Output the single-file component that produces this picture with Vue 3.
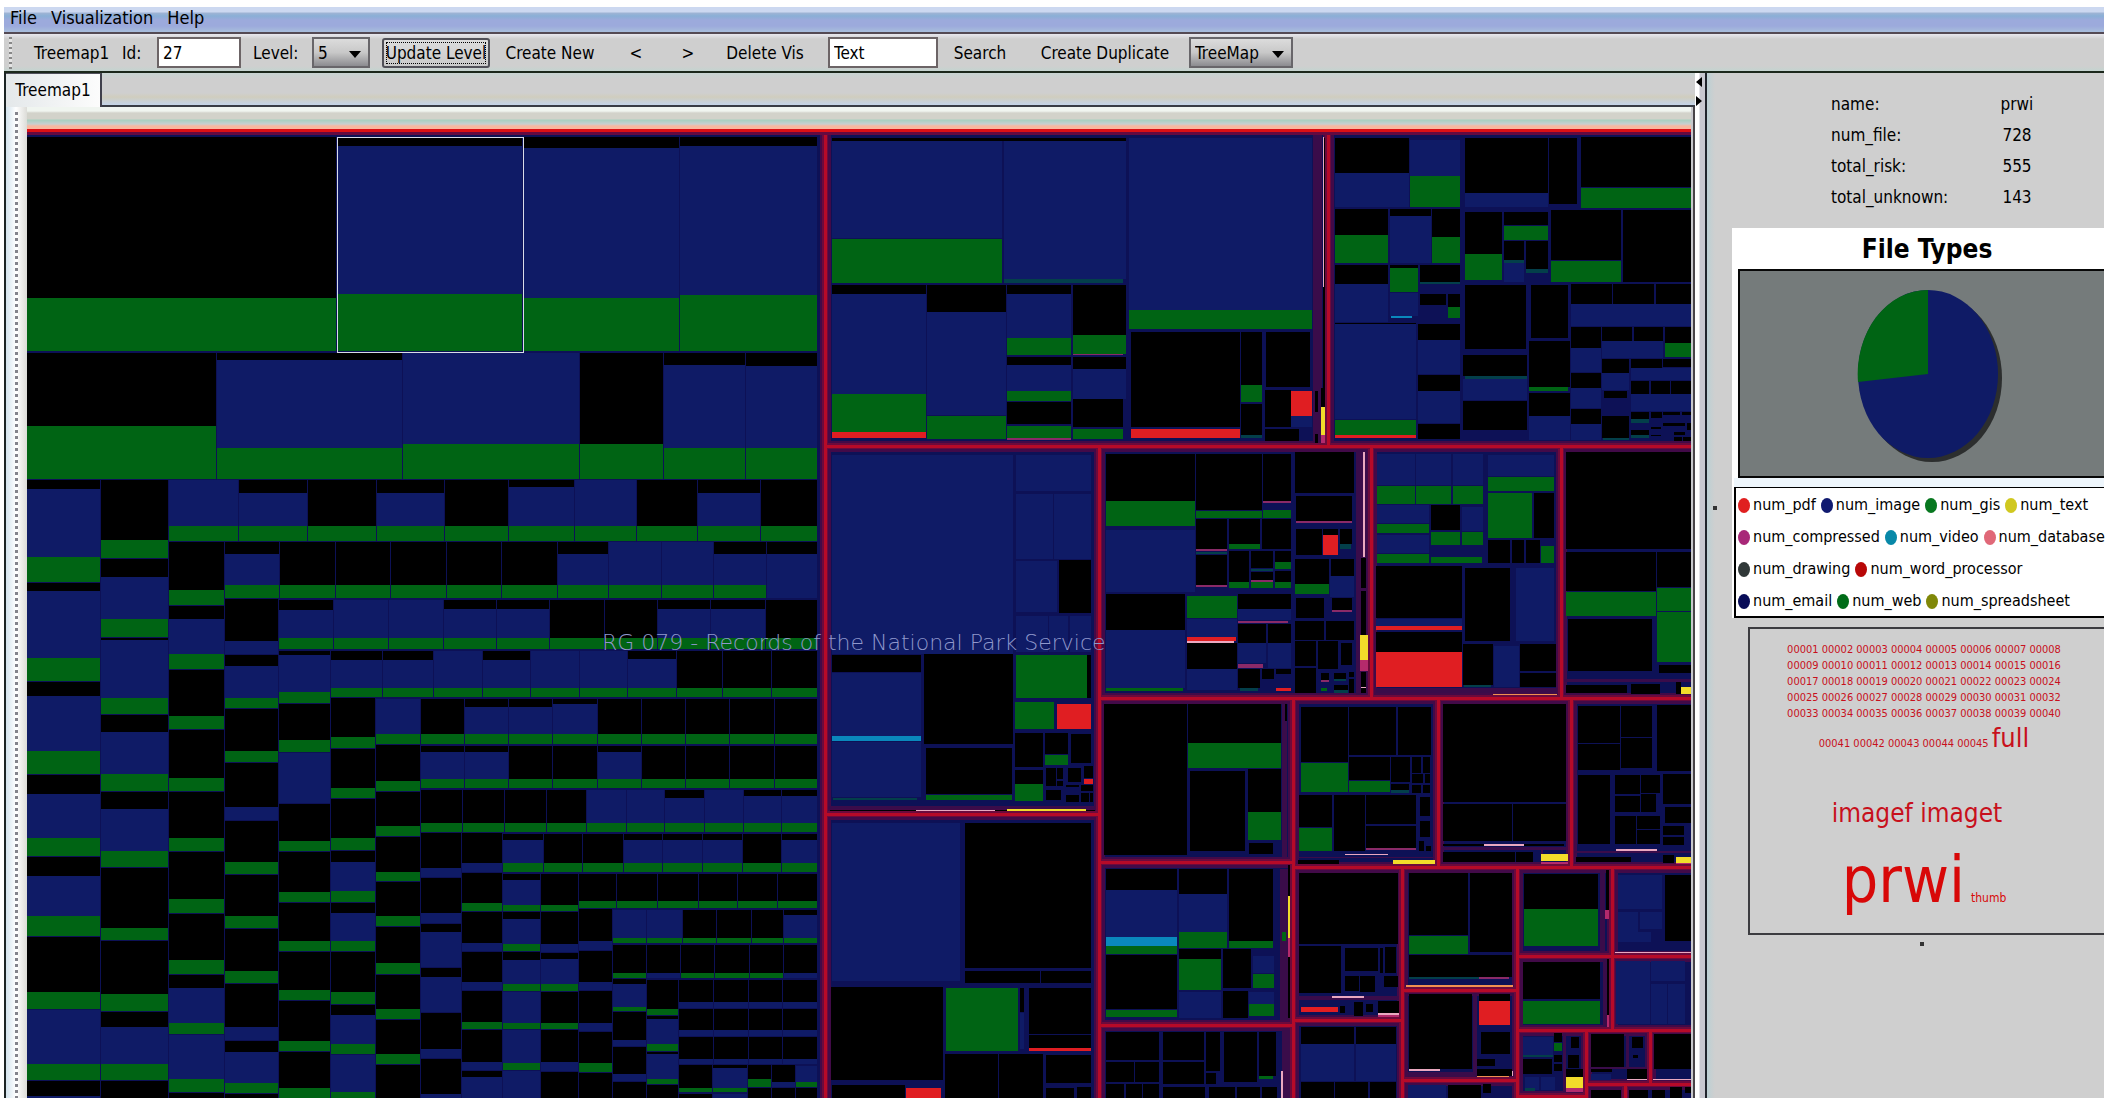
<script setup>
import { ref } from 'vue'

const nodeId = ref('27')
const level = ref('5')
const query = ref('Text')
const view = ref('TreeMap')

const info = [
  ['name:', 'prwi'],
  ['num_file:', '728'],
  ['total_risk:', '555'],
  ['total_unknown:', '143'],
]

const legend = [
  [['num_pdf', '#e02020'], ['num_image', '#101a70'], ['num_gis', '#087820'], ['num_text', '#d0c820']],
  [['num_compressed', '#a82878'], ['num_video', '#0888a8'], ['num_database', '#e06878']],
  [['num_drawing', '#303838'], ['num_word_processor', '#b80808']],
  [['num_email', '#080c58'], ['num_web', '#006c18'], ['num_spreadsheet', '#808808']],
]

const pad = (n) => String(n).padStart(5, '0')
const tagRows = [0, 8, 16, 24, 32].map((s) => Array.from({ length: 8 }, (_, i) => pad(s + i + 1)))
const lastTags = [41, 42, 43, 44, 45].map(pad)

/* ---- treemap ---- */
const colors = {
  plum: '#3a0c4a',
  black: '#000000',
  blue: '#0f1b66',
  green: '#006414',
  teal: '#033f4a',
  sky: '#0a88bc',
  mauve: '#8a2a68',
  magenta: '#b42a6c',
  red: '#e01e22',
  yellow: '#f2dc2a',
  pink: '#eaa8c0',
  orange: '#f09050',
}
const shapes = Object.fromEntries(Object.keys(colors).map((k) => [k, []]))

function add(color, x1, y1, x2, y2) {
  if (x2 > x1 && y2 > y1) shapes[color].push(`M${x1} ${y1}H${x2}V${y2}H${x1}Z`)
}

// A cell is black on top, then blue from `b`, then green from `g` (0 = band absent).
function cell(m, x1, x2, y1, b, g, y2) {
  const X1 = m.x(x1)
  const X2 = m.x(x2) - 1
  const end = m.y(y2) - 1
  const gy = g ? m.y(g) : end
  const by = b ? m.y(b) : gy
  add('black', X1, m.y(y1), X2, by)
  add('blue', X1, by, X2, gy)
  add('green', X1, gy, X2, end)
}

const mapper = (x, y, w, h, cols, rows) => ({
  x: (v) => Math.round(x + (v * w) / cols),
  y: (v) => Math.round(y + (v * h) / rows),
})

const page = mapper(0, 0, 1, 1, 1, 1)
const top = [
  [27, 337, 137, 0, 298, 352], [337, 523, 137, 146, 294, 352], [523, 680, 137, 148, 298, 352], [680, 818, 137, 146, 295, 352],
  [27, 217, 353, 0, 426, 480], [217, 403, 353, 360, 448, 480], [403, 580, 353, 353, 444, 480],
  [580, 664, 353, 0, 444, 480], [664, 746, 353, 365, 448, 480], [746, 818, 353, 366, 448, 480],
]
top.forEach((c) => cell(page, ...c))

const grid = mapper(0, 470, 830, 635, 2490, 1568)
const columns = [
  [81, 304, [25, 48, 215, 278], [278, 298, 463, 524], [524, 558, 695, 752], [752, 800, 909, 956], [956, 1003, 1102, 1153], [1153, 0, 1288, 1333], [1333, 1333, 1466, 1508], [1508, 1547, 0, 1554]],
  [304, 508, [25, 0, 174, 220], [220, 264, 369, 416], [416, 421, 563, 605], [605, 647, 750, 795], [795, 837, 940, 984], [984, 0, 1130, 1164], [1164, 0, 1294, 1339], [1339, 1375, 1466, 1508], [1508, 0, 0, 1554]],
  [508, 676, [178, 0, 297, 336], [336, 368, 455, 493], [493, 0, 608, 643], [643, 0, 760, 796], [796, 0, 909, 944], [944, 0, 1060, 1096], [1096, 0, 1210, 1246], [1246, 1279, 1366, 1395], [1395, 1395, 1505, 1539], [1539, 0, 0, 1554]],
  [676, 836, [318, 422, 0, 456], [456, 484, 563, 590], [590, 0, 694, 724], [724, 832, 0, 867], [867, 0, 968, 999], [999, 0, 1102, 1134], [1134, 0, 1238, 1270], [1270, 1375, 0, 1409], [1409, 1438, 1513, 1542], [1542, 0, 0, 1554]],
  [836, 992, [447, 458, 547, 578], [578, 0, 667, 700], [700, 700, 0, 825], [825, 0, 916, 944], [944, 0, 1041, 1068], [1068, 0, 1163, 1191], [1191, 0, 1285, 1312], [1312, 0, 1409, 1436], [1436, 0, 1527, 1554]],
  [992, 1127, [564, 0, 660, 690], [690, 0, 786, 813], [813, 0, 909, 942], [942, 968, 1040, 1068], [1068, 1094, 1163, 1191], [1191, 0, 1288, 1320], [1320, 1346, 1417, 1444], [1444, 1444, 1536, 1554]],
  [1127, 1262, [680, 0, 767, 794], [794, 0, 880, 906], [906, 0, 992, 1018], [1018, 0, 1102, 1129], [1129, 0, 1218, 1246], [1246, 0, 1332, 1358], [1358, 0, 1443, 1470], [1470, 0, 0, 1554]],
  [1262, 1387, [897, 983, 0, 1008], [1008, 1094, 0, 1120], [1120, 1141, 0, 1229], [1229, 1252, 0, 1341], [1341, 1430, 0, 1454], [1454, 1541, 0, 1554]],
  [1387, 1509, [897, 970, 0, 994], [994, 0, 1070, 1091], [1091, 1168, 0, 1190], [1190, 1264, 0, 1286], [1286, 0, 1364, 1384], [1384, 1463, 0, 1484], [1484, 1499, 0, 1554]],
  [1509, 1622, [997, 1012, 1073, 1091], [1091, 1109, 1170, 1191], [1191, 1210, 1270, 1288], [1288, 1288, 1366, 1384], [1384, 1384, 1465, 1484], [1484, 1484, 0, 1554]],
  [1622, 1736, [997, 0, 1073, 1091], [1091, 1170, 0, 1193], [1193, 1207, 1270, 1288], [1288, 0, 1366, 1384], [1384, 1463, 0, 1487], [1487, 0, 0, 1554]],
  [1736, 1838, [1085, 1163, 0, 1187], [1187, 1264, 0, 1286], [1286, 1366, 0, 1387], [1387, 0, 1465, 1489], [1489, 0, 0, 1554]],
  [1838, 1942, [1257, 1269, 1325, 1338], [1338, 1407, 0, 1425], [1425, 1491, 0, 1510], [1510, 0, 0, 1554]],
  [1942, 2036, [1259, 0, 1331, 1348], [1348, 1356, 1417, 1436], [1436, 1442, 1504, 1519], [1519, 0, 0, 1554]],
  [2036, 2140, [1470, 0, 1526, 1539], [1540, 0, 0, 1554]],
  [2140, 2243, [1470, 1477, 1526, 1539], [1542, 1542, 0, 1554]],
  [2243, 2315, [1470, 0, 1504, 1525], [1525, 0, 0, 1554]],
  [2315, 2387, [1470, 1510, 0, 1525], [1525, 0, 0, 1554]],
  [2387, 2453, [1471, 1471, 1510, 1525], [1525, 0, 0, 1554]],
]
columns.forEach(([x1, x2, ...cells]) => cells.forEach((c) => cell(grid, x1, x2, ...c)))

// Rows: top, green start, bottom, then the cells' left edges with their blue start.
const rows = [
  [25, 138, 177, [508, 25], [718, 57], [924, 0], [1130, 57], [1336, 0], [1528, 42], [1726, 25], [1912, 0], [2095, 57], [2284, 0]],
  [179, 283, 318, [676, 207], [839, 0], [1008, 0], [1172, 0], [1342, 0], [1505, 0], [1674, 207], [1828, 179], [1987, 179], [2142, 207], [2300, 207, 1]],
  [320, 415, 445, [836, 346], [1003, 320], [1167, 320], [1332, 343], [1491, 343], [1650, 0], [1815, 0], [1974, 343], [2134, 343], [2297, 0]],
  [448, 538, 564, [992, 469], [1149, 469], [1303, 448], [1449, 469], [1594, 448], [1740, 448], [1885, 467], [2030, 0], [2170, 0], [2316, 0]],
  [566, 653, 679, [1127, 566], [1262, 0], [1396, 585], [1528, 585], [1659, 578], [1793, 0], [1926, 0], [2058, 0], [2190, 0], [2325, 0]],
  [681, 763, 787, [1262, 696], [1396, 696], [1528, 0], [1659, 0], [1795, 696], [1926, 0], [2058, 0], [2190, 0], [2325, 0]],
  [789, 872, 896, [1262, 0], [1388, 0], [1515, 0], [1642, 0], [1762, 789], [1880, 789], [1996, 810], [2114, 789], [2232, 805], [2345, 805]],
  [898, 970, 996, [1509, 914], [1632, 0], [1749, 0], [1871, 914], [1988, 914], [2109, 914], [2228, 0], [2347, 914]],
  [998, 1064, 1084, [1736, 0], [1851, 0], [1974, 0], [2096, 0], [2213, 0], [2334, 0]],
  [1086, 1155, 1171, [1838, 1086], [1942, 1086], [2050, 0], [2151, 0], [2255, 0], [2353, 1099]],
  [1173, 1241, 1258, [1838, 0], [1940, 1241, 1], [2044, 0], [2146, 0], [2250, 0], [2352, 1241, 1]],
  [1260, 0, 1330, [2036, 1314], [2143, 1314], [2246, 1314], [2350, 1314]],
  [1331, 0, 1399, [2036, 1383], [2143, 1383], [2246, 1383], [2350, 1383]],
  [1400, 0, 1469, [2036, 1454], [2143, 1454], [2246, 1454], [2350, 1454]],
]
rows.forEach(([y1, g, y2, ...cells]) =>
  cells.forEach(([x, b, plain], i) => cell(grid, x, cells[i + 1]?.[0] ?? 2453, y1, b, plain ? 0 : g, y2)),
)

const panels = [
  {
    box: [815, 120, 520, 330, 1560, 990],
    plum: '1495 40 1520 970',
    black: '51 54 933 63,51 494 333 522,337 494 572 575,576 494 768 522,774 494 933 645,576 711 768 735,774 711 933 747,576 846 768 912,774 838 924 921,948 636 1275 921,1278 636 1341 795,1353 636 1485 800,1278 852 1341 945,1350 810 1427 921,1350 927 1452 962,1501 813 1509 875,1518 804 1533 861,1524 54 1533 804,1501 942 1509 970',
    blue: '51 63 561 354,566 63 933 477,942 54 1491 570,51 522 333 822,337 575 572 886,576 522 768 654,576 735 768 813,774 747 933 836,1427 888 1491 921',
    green: '51 356 561 489,942 570 1491 627,51 822 333 935,337 888 572 957,576 654 768 705,774 646 933 702,576 813 768 843,576 918 768 954,774 927 924 957,1278 795 1341 846',
    teal: '568 477 924 490,1278 946 1341 953',
    mauve: '774 702 924 705,576 954 768 959',
    red: '51 936 333 955,948 927 1275 955,1427 813 1491 888',
    yellow: '1518 861 1533 944',
    magenta: '1518 945 1530 968',
    pink: '1524 50 1527 502',
  },
  {
    box: [1310, 120, 400, 330, 1200, 990],
    black: '75 54 297 159,465 54 714 219,717 54 801 252,813 52 1143 201,75 267 234 345,239 267 363 288,366 267 450 351,465 276 576 402,582 276 714 314,723 270 932 420,938 270 1143 486,582 362 642 420,648 362 714 447,75 435 234 491,330 435 450 486,330 522 408 555,414 522 450 561,465 495 648 687,663 495 774 654,783 492 906 552,909 492 1032 552,1038 492 1143 555,324 611 450 660,324 765 450 813,324 912 450 958,459 705 651 768,459 843 651 930,657 663 780 801,657 819 780 888,783 621 873 684,876 621 966 663,972 621 1060 663,1065 621 1143 669,783 759 873 804,876 717 957 759,963 717 1056 744,1059 717 1143 741,783 867 873 912,882 813 951 834,963 783 1017 822,1023 783 1080 822,1084 783 1143 822,876 888 957 954,963 876 1017 896,1023 876 1056 893,1060 876 1110 885,1115 876 1143 885,963 930 1017 945,1060 909 1125 918,1132 909 1143 930,1092 936 1125 945,1092 950 1116 963,1120 950 1143 963,1023 922 1053 927,1023 945 1053 949,75 608 318 611,239 435 324 444',
    blue: '75 159 297 262,300 60 450 168,465 220 714 262,239 288 363 430,75 491 234 606,75 611 318 897,324 660 450 762,324 813 450 909,459 777 651 840,783 552 1143 618,239 520 324 588,582 428 642 486,876 663 1060 714,783 684 873 756,783 804 873 864,876 759 957 810,963 744 1143 780,963 822 1143 873,657 888 780 960,783 912 873 960',
    green: '300 169 450 261,813 203 1143 265,75 345 234 429,366 352 450 429,582 317 714 360,465 403 576 480,723 422 932 486,239 444 324 517,414 562 450 594,75 899 318 945,657 802 775 813,1065 670 1143 711',
    teal: '330 487 450 493,582 421 642 428,648 448 714 458,465 768 651 777,963 897 1017 908,963 946 1017 954,880 954 957 960',
    red: '75 945 318 954',
    sky: '242 588 305 594',
  },
  {
    box: [1090, 440, 620, 270, 1568, 810],
    plum: '672 30 700 764,1195 717 1520 725,723 744 1181 760',
    black: '40 41 266 183,268 41 434 210,438 41 508 183,518 36 667 158,522 168 663 243,268 237 346 327,351 237 430 312,435 237 508 327,522 268 586 346,632 268 663 312,589 268 628 285,268 346 346 435,351 333 402 426,407 333 463 385,467 333 508 366,407 397 463 420,467 393 508 426,518 357 604 432,609 357 667 408,40 462 241 570,374 462 508 507,245 610 372 687,374 553 446 608,450 553 508 608,522 474 592 533,612 474 663 510,518 543 592 600,597 543 667 600,374 688 430 744,435 688 465 717,518 603 572 678,577 603 627 687,635 609 662 675,518 684 572 758,583 700 604 720,617 700 647 717,617 735 652 750,655 695 667 710,655 716 667 758,470 688 508 702,686 355 697 445,686 452 697 585,686 695 697 758,862 195 936 270,1122 159 1173 294,1007 300 1062 369,1067 300 1097 369,1102 300 1138 369,723 379 941 534,723 575 941 636,948 384 1062 603,943 613 1018 735,1088 613 1179 693,1088 698 1179 741,1204 36 1520 327,1204 335 1431 453,1434 335 1520 442,1209 537 1421 692,1440 675 1520 698,1204 735 1358 759,1368 731 1442 762,1482 727 1495 762',
    blue: '40 270 266 456,40 570 241 744,245 536 372 592,374 508 508 540,374 610 446 670,450 610 508 684,245 688 372 750,606 409 667 470,727 42 821 136,824 42 914 136,917 42 995 136,1007 45 1173 108,727 195 858 250,940 200 995 272,727 284 858 340,1077 384 1173 602,1021 619 1084 741,723 536 941 557',
    green: '40 184 266 258,268 212 434 233,438 211 508 233,351 312 430 327,467 367 508 386,351 427 402 443,407 425 463 443,467 427 508 443,518 433 604 461,245 469 372 533,40 744 236 752,583 744 600 752,727 138 821 192,824 138 914 192,917 138 995 192,1007 110 1173 153,1007 159 1118 294,727 252 858 280,862 275 936 314,940 275 995 314,727 342 858 369,862 351 991 369,1140 318 1173 369,1204 456 1431 527,1434 443 1520 512,1434 515 1520 666',
    teal: '268 335 346 341,407 386 463 393,632 313 660 327,380 744 425 752,618 718 647 724,945 736 1015 742,617 751 652 759',
    mauve: '522 243 663 248,268 328 346 333,438 184 508 190,407 421 463 425,374 543 500 549,374 671 438 684,612 511 662 517,268 436 346 441,583 720 604 725',
    red: '589 286 627 345,245 592 370 603,723 558 941 570,723 637 941 740,470 744 508 752',
    yellow: '683 586 703 660,1495 741 1520 762',
    magenta: '683 661 703 693',
    pink: '690 36 695 350,245 603 363 608,686 741 697 744',
    orange: '1020 762 1181 768',
  },
  {
    box: [1090, 690, 620, 415, 1568, 1245],
    plum: '486 38 498 500,480 537 500 990,486 1020 506 1224,525 500 870 505,892 472 1203 480,1140 470 1145 515,1225 484 1520 489,525 918 785 930,525 975 785 980,968 905 978 1165,805 1145 968 1160,1290 540 1303 785,1298 805 1307 1010,1196 1030 1204 1205,1242 1030 1250 1140,1355 1030 1362 1130,1404 1030 1412 1130,1260 1132 1520 1136',
    black: '36 42 245 495,248 42 483 159,253 243 392 483,400 238 483 366,402 460 463 493,40 537 220 600,225 537 346 612,352 537 463 753,40 795 220 957,225 777 331 806,336 777 407 894,336 902 400 983,40 1026 175 1110,185 1026 288 1110,293 1026 328 1143,339 1026 422 1175,427 1026 470 1158,40 1116 111 1177,114 1116 175 1177,185 1116 288 1182,293 1148 319 1182,40 1182 87 1224,91 1182 131 1224,135 1182 175 1224,185 1192 290 1224,302 1192 367 1224,372 1192 430 1224,435 1192 472 1224,500 525 507 985,492 42 498 92,534 50 652 216,655 50 774 196,778 50 862 196,655 200 759 270,762 200 810 276,815 200 838 249,842 200 860 249,815 253 843 280,847 253 860 280,815 284 838 309,842 284 860 309,762 281 808 300,529 316 612 411,617 316 695 483,698 316 824 402,698 407 824 474,834 322 860 378,834 392 860 440,831 452 845 483,850 467 862 483,525 510 630 522,892 42 1203 336,892 342 1067 453,1070 342 1203 453,892 487 1075 517,1078 485 1120 515,892 463 1200 468,1234 47 1341 158,1234 162 1341 240,1344 47 1421 141,1344 144 1421 234,1433 45 1520 243,1234 255 1315 462,1328 255 1390 312,1393 255 1442 309,1328 317 1390 366,1394 312 1432 366,1328 377 1380 462,1384 377 1442 417,1384 420 1442 462,1449 252 1520 342,1455 350 1520 400,1449 409 1502 435,1449 441 1502 465,1230 500 1368 515,1448 494 1478 520,529 549 779 762,529 768 635 909,645 774 728 843,745 771 774 849,733 774 740 849,645 858 680 903,684 858 720 906,744 858 779 892,668 936 690 978,697 942 716 966,728 934 786 968,632 948 646 968,807 549 956 735,961 549 1068 786,807 795 1068 862,807 912 966 1137,985 912 1062 932,988 1027 1062 1092,979 1106 1023 1128,978 1137 1068 1158,1098 552 1285 657,1095 815 1291 927,1454 555 1520 753,1305 538 1314 660,1307 800 1314 975,534 1012 668 1062,672 1012 774 1062,534 1176 617 1224,620 1176 704 1224,708 1176 774 1224,905 1186 988 1224,995 1182 1013 1208,1095 1106 1168 1152,1174 1030 1194 1056,1174 1095 1194 1115,1174 1121 1194 1143,1216 1042 1237 1075,1210 1095 1237 1133,1204 1138 1248 1160,1267 1033 1350 1130,1370 1040 1398 1073,1372 1095 1385 1105,1358 1137 1412 1166,1426 1033 1520 1137,1267 1137 1320 1147,1267 1200 1342 1224,1363 1200 1412 1224,1421 1200 1455 1224,1467 1187 1496 1224,1505 1187 1520 1208',
    blue: '40 600 220 740,225 612 346 726,225 905 331 983,412 797 465 850,402 905 465 942,534 1063 668 1172,672 1063 774 1172,1335 555 1447 658,1335 667 1387 755,1390 667 1447 718,1387 727 1418 755,1330 812 1417 1002,1420 812 1505 874,1420 882 1459 1002,1461 882 1505 1002,1095 1042 1170 1095,805 1186 900 1224,1267 1152 1318 1170,1100 1160 1136 1200,1140 1160 1175 1200',
    green: '248 160 483 234,400 367 483 450,225 727 346 774,40 768 220 791,352 754 463 774,225 807 331 900,412 852 465 893,40 959 220 982,402 943 465 978,427 1158 463 1166,534 218 652 307,655 274 759 307,529 413 612 483,807 737 956 791,1098 658 1285 768,1095 933 1291 1001,1174 1060 1193 1083,486 727 495 752',
    teal: '762 300 808 308,1095 1094 1170 1101,1100 1194 1125 1202,807 862 985 866',
    sky: '40 741 220 767',
    mauve: '698 474 824 479,985 862 1060 867',
    red: '534 951 627 966,985 933 1062 1006',
    yellow: '767 510 872 524,1141 492 1208 514,1482 501 1520 518,501 618 508 745,1204 1161 1248 1193',
    magenta: '1141 515 1208 522,1482 518 1520 524,501 745 508 800,728 975 786 984,1302 660 1315 688,1204 1194 1248 1206,1307 975 1314 1010',
    pink: '645 491 753 496,996 462 1097 467,1330 477 1433 482,613 918 693 923,728 969 786 975,1328 786 1520 792,807 1137 884 1142,1358 1166 1412 1169,1422 1167 1520 1170,484 1142 487 1224,1067 1142 1070 1158',
    orange: '505 333 508 415,800 885 1070 890,978 1157 1060 1161',
  },
  {
    box: [815, 440, 300, 665, 900, 1568],
    plum: '40 862 840 871',
    black: '51 508 318 548,327 505 594 716,733 283 828 407,816 508 828 608,333 726 591 835,600 690 684 772,600 777 684 810,690 690 759 740,768 693 828 762,693 773 723 815,727 773 744 800,727 805 744 815,759 773 797 806,807 769 834 798,693 826 738 850,753 814 792 819,753 838 792 853,798 814 834 828,798 832 822 853,826 832 834 853,450 903 828 1246,450 1252 675 1280,678 1252 828 1280,48 1290 384 1509,615 1292 627 1348,642 1292 828 1400,642 1404 828 1433,390 1448 549 1551,552 1448 684 1551,693 1450 828 1517,51 1522 270 1551,693 1528 777 1551,786 1525 828 1551,45 873 840 877',
    blue: '51 35 594 505,603 36 828 120,603 127 714 280,718 127 828 280,603 285 727 405,603 414 698 500,702 414 760 500,764 414 828 500,51 549 318 698,51 712 318 842,51 903 435 1276,615 1350 627 1436',
    green: '603 508 816 608,600 618 717 681,333 836 591 850,690 742 759 766,600 812 684 852,393 1292 609 1440',
    teal: '55 843 305 850',
    sky: '51 699 318 710',
    red: '726 622 828 681,807 799 834 810,642 1434 828 1440,273 1528 378 1551',
    pink: '303 872 540 877',
    yellow: '576 871 812 879',
  },
]
for (const { box, ...layers } of panels) {
  const m = mapper(...box)
  for (const [color, list] of Object.entries(layers)) {
    for (const item of list.split(',')) {
      const [x1, y1, x2, y2] = item.split(' ').map(Number)
      add(color, m.x(x1), m.y(y1), m.x(x2), m.y(y2))
    }
  }
}
const layers = Object.entries(colors).map(([name, fill]) => ({ name, fill, d: shapes[name].join('') }))

// Folder borders
const frames = [
  'M825 131V1098', 'M1328 131V446', 'M825 446H1691', 'M1099 446V1098', 'M1371 446V698', 'M1561 446V698',
  'M1099 698H1691', 'M825 814H1099', 'M1293 698V1098', 'M1438 698V867', 'M1571 698V867', 'M1099 862H1293',
  'M1293 867H1691', 'M1402 867V1098', 'M1517 867V1098', 'M1612 867V1030', 'M1517 956H1691', 'M1517 1030H1691',
  'M1099 1025H1293', 'M1293 1020H1402', 'M1402 990H1517', 'M1402 1080H1517', 'M1586 1030V1098', 'M1650 1030V1084',
  'M1586 1084H1691', 'M1517 1096H1586', 'M1625 1084V1098',
].join('')
</script>

<template>
  <div class="app">
    <nav class="menubar">
      <button type="button">File</button>
      <button type="button">Visualization</button>
      <button type="button">Help</button>
    </nav>

    <form class="toolbar" @submit.prevent>
      <span class="grip"></span>
      <span class="title">Treemap1</span>
      <label class="idlabel" for="node-id">Id:</label>
      <input id="node-id" v-model="nodeId" class="id" type="text" />
      <label class="levellabel" for="level">Level:</label>
      <span class="pick small">
        <select id="level" v-model="level"><option>5</option></select>
      </span>
      <button type="submit" class="update">Update Level</button>
      <button type="button" class="create">Create New</button>
      <button type="button" class="step">&lt;</button>
      <button type="button" class="step">&gt;</button>
      <button type="button" class="delete">Delete Vis</button>
      <input v-model="query" class="query" type="text" aria-label="Search text" />
      <button type="button" class="search">Search</button>
      <button type="button" class="duplicate">Create Duplicate</button>
      <span class="pick wide">
        <select v-model="view" aria-label="View"><option>TreeMap</option></select>
      </span>
    </form>

    <div class="workspace">
      <main class="board">
        <div class="tabs"><button type="button" class="tab">Treemap1</button></div>
        <div class="pane">
          <div class="gutter"></div>
          <div class="content">
            <div class="strip"></div>
            <div class="map">
              <svg viewBox="27 129 1664 969" preserveAspectRatio="none" shape-rendering="crispEdges">
                <rect x="27" y="129" width="1664" height="969" fill="#0d1156" />
                <path :d="frames" fill="none" stroke="#420a48" stroke-width="11" />
                <path v-for="l in layers" :key="l.name" :d="l.d" :fill="l.fill" />
                <path :d="frames" fill="none" stroke="#6c0a3c" stroke-width="6" />
                <path :d="frames" fill="none" stroke="#b60a28" stroke-width="3" />
                <rect x="27" y="129" width="1664" height="3" fill="#dc1014" />
                <rect x="27" y="132" width="1664" height="3" fill="#640a40" />
                <rect x="337" y="137" width="186" height="215" fill="none" stroke="#d8dce8" />
              </svg>
              <span class="record">RG 079 - Records of the National Park Service</span>
            </div>
          </div>
        </div>
      </main>

      <div class="splitter">
        <svg width="8" height="40" viewBox="0 0 8 40"><path d="M7 4V14L1 9ZM1 23V33L7 28Z" /></svg>
      </div>

      <aside class="side">
        <dl class="info">
          <template v-for="[k, v] in info" :key="k">
            <dt>{{ k }}</dt>
            <dd>{{ v }}</dd>
          </template>
        </dl>

        <section class="types">
          <h2>File Types</h2>
          <div class="chart">
            <svg width="152" height="182" viewBox="0 0 152 182">
              <ellipse cx="75" cy="90" rx="70" ry="84" fill="#2c2e2e" />
              <ellipse cx="71" cy="86" rx="70" ry="84" fill="#0f1b66" />
              <path d="M71 86V2A70 84 0 0 0 1 94Z" fill="#006414" />
            </svg>
          </div>
          <div class="legend">
            <div v-for="(row, i) in legend" :key="i" class="legendrow">
              <span v-for="[name, color] in row" :key="name" class="key">
                <i :style="{ background: color }"></i>{{ name }}
              </span>
            </div>
          </div>
        </section>

        <section class="cloud">
          <p v-for="(row, i) in tagRows" :key="i" class="tags">{{ row.join(' ') }}</p>
          <p class="tags last">{{ lastTags.join(' ') }} <span class="full">full</span></p>
          <p class="mid">imagef imaget</p>
          <p class="big"><span>prwi</span><span class="thumb">thumb</span></p>
        </section>
        <span class="dot"></span>
      </aside>
    </div>
  </div>
</template>

<style>
body {
  margin: 0;
  background: #fff;
}
</style>

<style scoped>
.app {
  box-sizing: border-box;
  display: flex;
  flex-direction: column;
  height: 100vh;
  padding: 7px 6px 7px 4px;
  overflow: hidden;
  color: #000;
  font: 17px/20px 'DejaVu Sans Condensed', 'DejaVu Sans', sans-serif;
  font-stretch: condensed;
}
button,
input,
select {
  box-sizing: border-box;
  margin: 0;
  padding: 0;
  border: 0;
  border-radius: 0;
  background: none;
  color: inherit;
  font: inherit;
  white-space: nowrap;
}
.menubar {
  display: flex;
  gap: 14px;
  height: 25px;
  padding-left: 6px;
  border-bottom: 2px solid #544a54;
  background: linear-gradient(#ccd8f0 0 5px, #9fb4d4 6px, #8aafd6 9px, #9caadc 13px 19px, #a8bedc);
  font-size: 18px;
  line-height: 22px;
}
.menubar button {
  height: 22px;
}
.toolbar {
  display: flex;
  flex: none;
  align-items: center;
  height: 37px;
  border-bottom: 2px solid #1c281c;
  background: linear-gradient(#e8e8ee, #cfcfcf 5px 32px, #c4d4d0);
}
.toolbar > * {
  flex: none;
}
.grip {
  width: 3px;
  height: 32px;
  margin: 0 22px 0 5px;
  background: repeating-linear-gradient(#888 0 2px, #e4e4e4 2px 5px);
}
.title {
  width: 88px;
}
.idlabel {
  width: 35px;
}
input {
  height: 31px;
  padding-left: 4px;
  border: 2px solid #6c6466;
  background: #fff;
}
.id {
  width: 84px;
  margin-right: 12px;
}
.levellabel {
  width: 59px;
}
.pick {
  position: relative;
  height: 31px;
}
.pick::after {
  content: '';
  position: absolute;
  top: 14px;
  right: 9px;
  border: 6px solid transparent;
  border-top: 7px solid #000;
  border-bottom: 0;
  pointer-events: none;
}
select {
  appearance: none;
  width: 100%;
  height: 31px;
  padding-left: 4px;
  border: 2px solid #68666a;
  background: linear-gradient(#dcdcdc, #c8c8c8 50%, #8c8c90);
}
.small {
  width: 58px;
  margin-right: 12px;
}
.wide {
  width: 104px;
}
.update {
  width: 108px;
  height: 30px;
  border: 2px solid #505058;
  border-radius: 3px;
  outline: 1px dotted #000;
  outline-offset: -5px;
  background: linear-gradient(#dcdcdc, #cacaca);
}
.create {
  width: 120px;
}
.step {
  width: 52px;
}
.delete {
  width: 102px;
  margin-right: 12px;
}
.query {
  width: 110px;
}
.search {
  width: 84px;
}
.duplicate {
  width: 166px;
}
.wide {
  margin-left: 1px;
}
.workspace {
  display: flex;
  flex: 1;
  min-height: 0;
  background: #cfcfcf;
}
.board {
  display: flex;
  flex: 1;
  flex-direction: column;
  min-width: 0;
  border-left: 2px solid #1c2424;
}
.tabs {
  display: flex;
  flex: none;
  height: 34px;
  background: linear-gradient(#c8d4d2, #cfcfcf 6px 20px, #d0cdbe 24px, #c4d4e8 32px, #383c44 32px);
}
.tab {
  width: 96px;
  height: 34px;
  padding-bottom: 2px;
  border-top: 1px solid #50505c;
  border-right: 2px solid #40404c;
  background: linear-gradient(90deg, #e4e8ea, #fcfcfc);
}
.pane {
  display: flex;
  flex: 1;
  min-height: 0;
  border-right: 2px solid #484448;
}
.gutter {
  width: 21px;
  background:
    repeating-linear-gradient(#84848c 0 3px, #fff 3px 6px) 9px 5px / 3px 100% no-repeat,
    linear-gradient(90deg, #d4e4ee, #fff 10px, #dcdcd8);
}
.content {
  display: flex;
  flex: 1;
  flex-direction: column;
  min-width: 0;
  border-right: 2px solid #c8c8cc;
}
.strip {
  flex: none;
  height: 22px;
  background: linear-gradient(#f0f5f0 0 4px, #d2d2ca 6px 12px, #a8d0c0 13px, #c8d0d0 17px, #f8b8a0 19px);
}
.map {
  position: relative;
  flex: 1;
  min-height: 0;
}
.map svg {
  position: absolute;
  width: 100%;
  height: 100%;
}
.record {
  position: absolute;
  top: 500px;
  left: 575px;
  color: #9098cc;
  font: 200 22px/28px 'DejaVu Sans', sans-serif;
  white-space: nowrap;
}
.splitter {
  width: 10px;
  border-right: 2px solid #20242c;
  background: linear-gradient(90deg, #fff 4px, #c8c8d0 5px);
}
.splitter svg {
  display: block;
}
.side {
  position: relative;
  box-sizing: border-box;
  width: 397px;
  padding: 0 0 0 25px;
  background: linear-gradient(90deg, #bcd0d4, #cfcfcf 8px);
}
.side::before {
  content: '';
  position: absolute;
  top: 433px;
  left: 6px;
  width: 4px;
  height: 4px;
  background: #333;
}
.info {
  display: grid;
  grid-template-columns: 157px 58px;
  margin: 0;
  padding: 16px 0 15px 99px;
  line-height: 31px;
  font-size: 17px;
}
.info dd {
  margin: 0;
  text-align: center;
}
.types {
  background: #fff;
}
h2 {
  margin: 0;
  padding: 2px 0 0 18px;
  text-align: center;
  font: bold 26px/39px 'DejaVu Sans Condensed', 'DejaVu Sans', sans-serif;
  font-stretch: condensed;
}
.chart {
  box-sizing: border-box;
  height: 209px;
  margin-left: 6px;
  padding: 17px 0 0 117px;
  border: 2px solid #080808;
  border-right: 0;
  background: #757b7b;
}
.chart svg {
  display: block;
}
.legend {
  box-sizing: border-box;
  height: 131px;
  margin: 9px 0 0 2px;
  padding: 1px 0 0 2px;
  border: 2px solid #000;
  border-top-width: 1px;
  border-right: 0;
  background: #fff;
  box-shadow: 0 -9px 0 #eef6fc;
}
.legendrow {
  display: flex;
  gap: 5px;
  line-height: 32px;
  font-size: 16px;
}
.key {
  display: flex;
  align-items: center;
  white-space: nowrap;
}
.key i {
  width: 12px;
  height: 15px;
  margin-right: 3px;
  border-radius: 50%;
}
.cloud {
  box-sizing: border-box;
  height: 308px;
  margin: 9px 0 0 16px;
  padding: 13px 6px 0 0;
  border: 2px solid #3c3c40;
  border-right: 0;
  color: #c8101c;
  text-align: center;
}
.cloud p {
  margin: 0;
  white-space: nowrap;
}
.cloud .tags {
  font-size: 11px;
  line-height: 16px;
}
.cloud .last {
  line-height: 32px;
}
.full {
  font-size: 27px;
}
.cloud .mid {
  padding: 28px 14px 0 0;
  font-size: 26px;
  line-height: 50px;
}
.cloud .big {
  display: flex;
  align-items: baseline;
  justify-content: center;
  gap: 6px;
  color: #d80808;
  font-size: 64px;
  line-height: 84px;
}
.cloud .thumb {
  font-size: 12px;
}
.dot {
  display: block;
  width: 4px;
  height: 4px;
  margin: 7px auto 0 188px;
  background: #333;
}
</style>
